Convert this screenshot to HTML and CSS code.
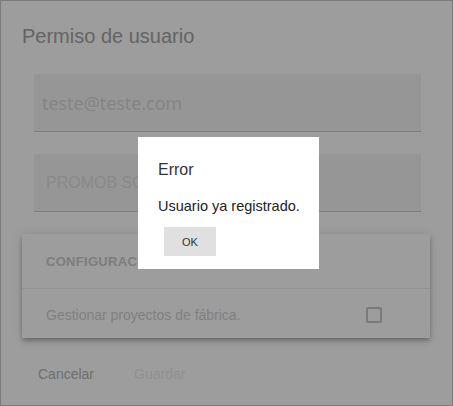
FILE: index.html
```html
<!DOCTYPE html>
<html lang="es">
<head>
  <meta charset="UTF-8" />
  <meta name="viewport" content="width=device-width, initial-scale=1.0" />
  <title>Permiso de usuario</title>
  <link rel="stylesheet" href="styles.css">
</head>
<body>

  <div class="screen">
    <div class="page">
      <h1 class="title">Permiso de usuario</h1>

      <!-- User fields -->
      <div class="field field-email">
        <span class="value">teste@teste.com</span>
      </div>
      <div class="field field-company">
        <span class="value">PROMOB SOFTWARE</span>
      </div>

      <!-- Settings card -->
      <div class="card">
        <div class="card-header">CONFIGURACIÓN</div>
        <div class="card-row">
          <span>Gestionar proyectos de fábrica.</span>
          <span class="checkbox"></span>
        </div>
      </div>

      <div class="actions">
        <button class="btn">Cancelar</button>
        <button class="btn disabled">Guardar</button>
      </div>
    </div>

    <!-- Error dialog -->
    <div class="overlay">
      <div class="dialog">
        <h2>Error</h2>
        <p>Usuario ya registrado.</p>
        <button class="ok">OK</button>
      </div>
    </div>
  </div>

</body>
</html>
```

FILE: styles.css
```css
body {
  margin: 0;
  font-family: "Liberation Sans", Arial, sans-serif;
}

.screen {
  position: relative;
  width: 453px;
  height: 406px;
  box-sizing: border-box;
  border: 1px solid #7b7b7b;
  background: white;
  overflow: hidden;
}

.page {
  padding: 24px 22px 0 21px;
}

.title {
  margin: 0;
  font-size: 20px;
  font-weight: normal;
  line-height: 23px;
  color: #a3a3a3;
}

.field {
  display: flex;
  align-items: center;
  height: 57px;
  margin: 0 9px 0 12px;
  background: #f4f4f4;
  border-bottom: 1px solid #cbcbcb;
}

.field-email {
  margin-top: 26px;
  padding-left: 8px;
  font-family: "Open Sans", sans-serif;
  font-size: 18px;
  color: #d6d6d6;
}

.field-company {
  margin-top: 22px;
  padding-left: 12px;
  font-size: 16px;
  color: #dedede;
}

.card {
  margin-top: 22px;
  background: white;
  box-shadow: 0 2px 4px -1px rgba(0, 0, 0, 0.2), 0 4px 5px rgba(0, 0, 0, 0.14), 0 1px 10px rgba(0, 0, 0, 0.12);
}

.card-header {
  display: flex;
  align-items: center;
  height: 54px;
  padding-left: 24px;
  font-size: 13px;
  font-weight: bold;
  letter-spacing: 0.3px;
  color: #cccccc;
  border-bottom: 1px solid #eeeeee;
}

.card-row {
  display: flex;
  align-items: center;
  justify-content: space-between;
  height: 47px;
  padding: 2px 48px 0 24px;
  font-size: 14px;
  color: #d0d0d0;
}

.checkbox {
  width: 12px;
  height: 12px;
  border: 2px solid #c6c6c6;
  border-radius: 2px;
}

.actions {
  display: flex;
  gap: 8px;
  margin-top: 18px;
}

.btn {
  height: 36px;
  padding: 0 16px;
  background: none;
  border: none;
  font-family: "Liberation Sans", Arial, sans-serif;
  font-size: 14px;
  color: #b4b4b4;
}

.btn.disabled {
  color: #ececec;
}

.overlay {
  position: absolute;
  inset: 0;
  display: flex;
  justify-content: center;
  align-items: center;
  padding-left: 4px;
  background: rgba(0, 0, 0, 0.384);
}

.dialog {
  width: 141px;
  background: white;
  padding: 24px 20px 13px 20px;
  font-family: "Liberation Sans", Arial, sans-serif;
}

.dialog h2 {
  margin: 0;
  font-size: 16px;
  font-weight: normal;
  color: #333;
}

.dialog p {
  margin: 19px 0 13px;
  font-size: 14.5px;
  white-space: nowrap;
  color: #222;
}

.ok {
  display: block;
  width: 52px;
  height: 29px;
  margin-left: 6px;
  background: #e0e0e0;
  border: none;
  font-family: "Liberation Sans", Arial, sans-serif;
  font-size: 11px;
  color: #333;
}
```
